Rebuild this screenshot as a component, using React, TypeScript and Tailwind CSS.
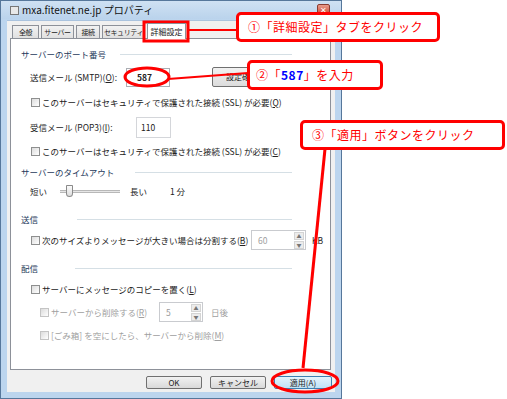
import React from "react";

const jp = "font-['Noto_Sans_CJK_JP','Noto_Sans',sans-serif]";

const Check = ({ disabled }: { disabled?: boolean }) => (
  <span
    className={`inline-block w-[9px] h-[9px] border shrink-0 bg-gradient-to-br from-[#dcdcdc] to-[#ffffff] ${
      disabled ? "border-[#c4c4c4]" : "border-[#8e8f8f]"
    }`}
  />
);

const Header = ({ text, lineFrom }: { text: string; lineFrom: number }) => (
  <div className="flex items-center h-[14px] pr-[38px]">
    <span className="text-[8.5px] text-[#1e395b] leading-none whitespace-nowrap" style={{ width: lineFrom }}>
      {text}
    </span>
    <span className="flex-1 h-px bg-[#d5dfe5]" />
  </div>
);

const Spin = ({ value, w, disabled }: { value: string; w: string; disabled?: boolean }) => (
  <div className={`flex h-[20px] border border-[#c9cbcf] bg-white shrink-0 ${w}`}>
    <span className={`flex-1 pl-[6px] text-[8.5px] leading-[18px] ${disabled ? "text-[#9a9a9a]" : "text-[#a0a0a0]"}`}>
      {value}
    </span>
    <div className="flex flex-col w-[10px] m-px gap-px">
      <span className="flex-1 bg-[#ececec] border border-[#d4d4d4] text-[5px] leading-[6px] text-center text-[#777]">▲</span>
      <span className="flex-1 bg-[#ececec] border border-[#d4d4d4] text-[5px] leading-[6px] text-center text-[#777]">▼</span>
    </div>
  </div>
);

const Btn = ({ label }: { label: string }) => (
  <div className="w-[56px] h-[13px] border border-[#707070] rounded-[2px] bg-gradient-to-b from-[#f2f2f2] to-[#d9d9d9] text-[8px] leading-[11px] text-center text-[#222]">
    {label}
  </div>
);

const tabs: [string, string][] = [
  ["全般", "w-[27px]"],
  ["サーバー", "w-[33px]"],
  ["接続", "w-[24px]"],
  ["セキュリティ", "w-[43px]"],
];

export default function App() {
  return (
    <div className={`relative w-[507px] h-[399px] bg-white overflow-hidden ${jp}`}>
      {/* dialog window */}
      <div className="w-[342px] h-[399px] flex flex-col border border-[#56779b] bg-[#bcd5ee]">
        <div className="h-[18px] flex items-center pl-[9px] pr-[11px] bg-gradient-to-b from-[#cfe1f3] to-[#bad3ec]">
          <span className="w-[9px] h-[9px] bg-[#e8e8e8] border border-[#777] mr-[3px]" />
          <span className="text-[10px] text-[#111] leading-none">mxa.fitenet.ne.jp プロパティ</span>
          <span className="ml-auto w-[13px] h-[12px] rounded-[2px] bg-gradient-to-b from-[#e89a8a] to-[#c9402c] border border-[#8a3b30] text-white text-[8px] leading-[10px] text-center">
            ✕
          </span>
        </div>
        <div className="flex-1 mx-[6px] mb-[6px] mt-px bg-[#f0f0f0] flex flex-col border-t border-[#aac3de]">
          {/* tabs */}
          <div className="flex items-end h-[17px] pl-[5px] gap-[2px]">
            {tabs.map(([t, w]) => (
              <div
                key={t}
                className={`h-[13px] ${w} border border-b-0 border-[#8d9199] bg-gradient-to-b from-[#f2f2f2] to-[#e0e0e0] text-[7px] leading-[12px] text-center whitespace-nowrap tracking-[-0.4px] text-[#222]`}
              >
                {t}
              </div>
            ))}
            <div className="relative h-[16px] w-[39px] -mb-px border border-b-0 border-[#8d9199] bg-white text-[8px] leading-[15px] text-center whitespace-nowrap text-[#222] z-10">
              詳細設定
            </div>
          </div>
          {/* panel */}
          <div className="ml-[3px] mr-[4px] h-[332px] border border-[#8d9199] bg-white pl-[10px] flex flex-col whitespace-nowrap">
            <div className="mt-[8px]">
              <Header text="サーバーのポート番号" lineFrom={99} />
            </div>
            <div className="mt-[6px] h-[20px] flex items-center pl-[9px] text-[8.5px] text-[#222]">
              <span className="w-[96px] shrink-0">送信メール (SMTP)(<u>O</u>):</span>
              <div className="w-[44px] h-[19px] shrink-0 border border-[#abadb3] bg-white pl-[10px] leading-[17px] font-bold">587</div>
              <div className="ml-[42px] w-[60px] h-[20px] shrink-0 border border-[#707070] rounded-[2px] bg-gradient-to-b from-[#f2f2f2] to-[#dcdcdc] text-[8px] leading-[18px] text-center">
                設定確認
              </div>
            </div>
            <div className="mt-[8px] h-[14px] flex items-center gap-[2px] pl-[10px] text-[8.5px] text-[#222]">
              <Check />
              <span>このサーバーはセキュリティで保護された接続 (SSL) が必要(<u>Q</u>)</span>
            </div>
            <div className="mt-[7px] h-[22px] flex items-center pl-[9px] text-[8.5px] text-[#222]">
              <span className="w-[106px] shrink-0">受信メール (POP3)(<u>I</u>):</span>
              <div className="w-[35px] h-[21px] border border-[#d4d6da] bg-white pl-[4px] leading-[19px]">110</div>
            </div>
            <div className="mt-[6px] h-[14px] flex items-center gap-[2px] pl-[10px] text-[8.5px] text-[#222]">
              <Check />
              <span>このサーバーはセキュリティで保護された接続 (SSL) が必要(<u>C</u>)</span>
            </div>
            <div className="mt-[7px]">
              <Header text="サーバーのタイムアウト" lineFrom={114} />
            </div>
            <div className="mt-[4px] h-[16px] flex items-center pl-[9px] text-[8.5px] text-[#222]">
              <span className="w-[30px]">短い</span>
              <div className="relative w-[60px] h-[3px] border-y border-[#b8b8b8] bg-[#e6e6e6] mr-[10px]">
                <span className="absolute left-[6px] -top-[6px] w-[7px] h-[12px] rounded-b-[4px] rounded-t-[1px] border border-[#8a8a8a] bg-gradient-to-b from-[#fafafa] to-[#dedede]" />
              </div>
              <span className="w-[40px]">長い</span>
              <span>1 分</span>
            </div>
            <div className="mt-[13px]">
              <Header text="送信" lineFrom={56} />
            </div>
            <div className="mt-[4px] h-[20px] flex items-center pl-[10px] text-[8.5px] text-[#222]">
              <Check />
              <span className="ml-[2px] w-[209px] shrink-0">次のサイズよりメッセージが大きい場合は分割する(<u>B</u>)</span>
              <Spin value="60" w="w-[55px]" />
              <span className="ml-[6px]">KB</span>
            </div>
            <div className="mt-[11px]">
              <Header text="配信" lineFrom={54} />
            </div>
            <div className="mt-[7px] h-[14px] flex items-center gap-[2px] pl-[10px] text-[8.5px] text-[#222]">
              <Check />
              <span>サーバーにメッセージのコピーを置く(<u>L</u>)</span>
            </div>
            <div className="mt-[6px] h-[20px] flex items-center pl-[19px] text-[8.5px] text-[#a0a0a0]">
              <Check disabled />
              <span className="ml-[2px] w-[108px] shrink-0">サーバーから削除する(<u>R</u>)</span>
              <Spin value="5" w="w-[44px]" disabled />
              <span className="ml-[8px]">日後</span>
            </div>
            <div className="mt-[6px] h-[14px] flex items-center gap-[2px] pl-[19px] text-[8.5px] text-[#a0a0a0]">
              <Check disabled />
              <span>[ごみ箱] を空にしたら、サーバーから削除(<u>M</u>)</span>
            </div>
          </div>
          {/* buttons */}
          <div className="flex justify-end gap-[8px] pr-[3px] mt-[6px]">
            <Btn label="OK" />
            <Btn label="キャンセル" />
            <div className="w-[58px] h-[13px] border border-[#3c7fb1] rounded-[2px] bg-gradient-to-b from-[#e5f4fc] to-[#bfe3f7] text-[8px] leading-[11px] text-center text-[#222]">
              適用(A)
            </div>
          </div>
        </div>
      </div>

      {/* annotations */}
      <svg className="absolute inset-0 pointer-events-none" width="507" height="399">
        <rect x="144" y="22" width="44" height="19" fill="none" stroke="#f00" strokeWidth="3" />
        <line x1="188" y1="30" x2="237" y2="30" stroke="#f00" strokeWidth="2" />
        <ellipse cx="147" cy="77" rx="22" ry="9" fill="none" stroke="#f00" strokeWidth="3" />
        <line x1="168" y1="79" x2="248" y2="73" stroke="#f00" strokeWidth="2" />
        <line x1="325" y1="149" x2="303" y2="368" stroke="#f00" strokeWidth="3" />
        <ellipse cx="305" cy="381" rx="33" ry="11" fill="none" stroke="#f00" strokeWidth="3" />
      </svg>
      <div className="absolute left-[236px] top-[12px] w-[204px] h-[30px] rounded-[5px] border-[3px] border-[#f00] bg-white flex items-center pl-[9px] text-[12px] tracking-[0.5px] text-[#f00]">
        ①「詳細設定」タブをクリック
      </div>
      <div className="absolute left-[247px] top-[60px] w-[136px] h-[30px] rounded-[5px] border-[3px] border-[#f00] bg-white flex items-center pl-[6px] text-[12px] tracking-[0.5px] text-[#f00]">
        ②「<span className="text-[#0000ff] font-bold">587</span>」を入力
      </div>
      <div className="absolute left-[300px] top-[120px] w-[205px] h-[30px] rounded-[5px] border-[3px] border-[#f00] bg-white flex items-center pl-[9px] text-[12px] tracking-[0.5px] text-[#f00]">
        ③「適用」ボタンをクリック
      </div>
    </div>
  );
}
